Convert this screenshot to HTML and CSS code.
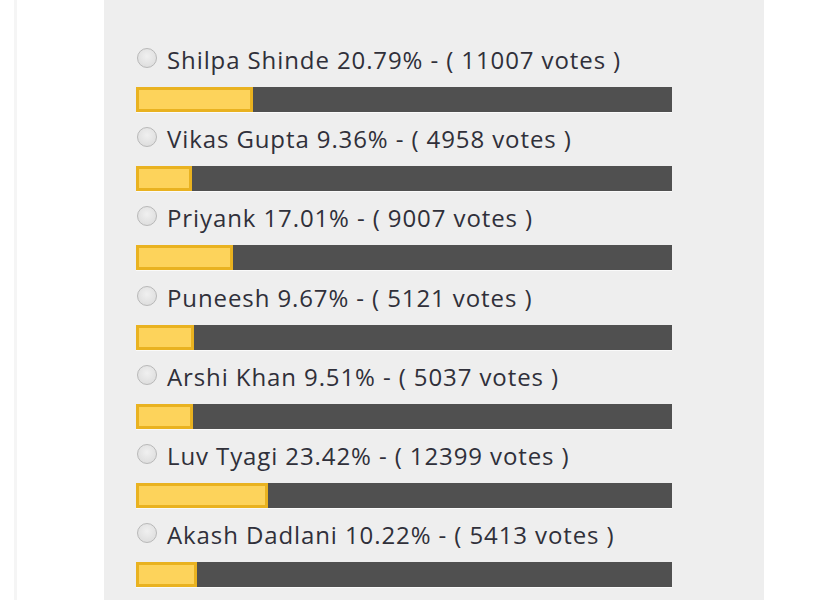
FILE: index.html
```html
<!DOCTYPE html>
<html lang="en">
<head>
    <meta charset="UTF-8">
    <title>Poll Results</title>
    <link rel="stylesheet" href="styles.css">
</head>
<body>
    <div class="page">
        <div class="poll">
            <div class="poll-item">
                <label class="option"><span class="radio"></span>Shilpa Shinde 20.79% - ( 11007 votes )</label>
                <div class="bar"><div class="fill" style="width: 20.79%"></div></div>
            </div>
            <div class="poll-item">
                <label class="option"><span class="radio"></span>Vikas Gupta 9.36% - ( 4958 votes )</label>
                <div class="bar"><div class="fill" style="width: 9.36%"></div></div>
            </div>
            <div class="poll-item">
                <label class="option"><span class="radio"></span>Priyank 17.01% - ( 9007 votes )</label>
                <div class="bar"><div class="fill" style="width: 17.01%"></div></div>
            </div>
            <div class="poll-item">
                <label class="option"><span class="radio"></span>Puneesh 9.67% - ( 5121 votes )</label>
                <div class="bar"><div class="fill" style="width: 9.67%"></div></div>
            </div>
            <div class="poll-item">
                <label class="option"><span class="radio"></span>Arshi Khan 9.51% - ( 5037 votes )</label>
                <div class="bar"><div class="fill" style="width: 9.51%"></div></div>
            </div>
            <div class="poll-item">
                <label class="option"><span class="radio"></span>Luv Tyagi 23.42% - ( 12399 votes )</label>
                <div class="bar"><div class="fill" style="width: 23.42%"></div></div>
            </div>
            <div class="poll-item">
                <label class="option"><span class="radio"></span>Akash Dadlani 10.22% - ( 5413 votes )</label>
                <div class="bar"><div class="fill" style="width: 10.22%"></div></div>
            </div>
        </div>
    </div>
</body>
</html>
```

FILE: styles.css
```css
* {
    margin: 0;
    padding: 0;
    box-sizing: border-box;
}

body {
    background: #ffffff;
    font-family: "Open Sans", Lato, sans-serif;
    color: #30303a;
    overflow: hidden;
}

.page {
    margin-left: 14px;
    border-left: 3px solid #f5f5f5;
    padding-left: 87px;
    min-height: 100vh;
}

.poll {
    width: 660px;
    min-height: 100vh;
    background: #eeeeee;
    padding: 42px 32px 0;
}

.poll-item {
    margin-bottom: 8.2px;
}

.option {
    display: flex;
    align-items: center;
    height: 36px;
    font-size: 24px;
    line-height: 36px;
    letter-spacing: 0.9px;
    margin-bottom: 9px;
}

.radio {
    width: 20px;
    height: 20px;
    border-radius: 50%;
    border: 1px solid #b8b8b8;
    background: radial-gradient(circle at 50% 40%, #f0f0f0, #d9d9d9);
    margin: -4px 10px 0 1px;
    flex-shrink: 0;
}

.bar {
    width: 536px;
    height: 26px;
    background: #505050;
    border-bottom: 1px solid #fafafa;
}

.fill {
    box-sizing: content-box;
    height: 19px;
    background: #fdd35b;
    border: 3px solid #e9b220;
}
```
